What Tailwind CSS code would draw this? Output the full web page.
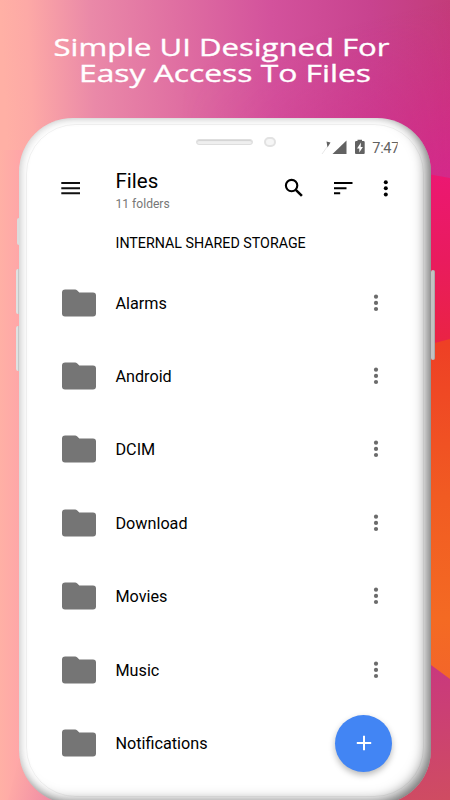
<!DOCTYPE html>
<html lang="en">
<head>
<meta charset="utf-8">
<meta name="viewport" content="width=device-width, initial-scale=1">
<title>Files</title>
<script src="https://cdn.jsdelivr.net/npm/@tailwindcss/browser@4"></script>
</head>
<body class="bg-[#d4509b]">
<div class="relative isolate flex h-[800px] w-[450px] flex-col overflow-hidden font-[Roboto,sans-serif]">
  <!-- Backdrop -->
  <svg class="absolute inset-0 -z-10" width="450" height="800" viewBox="0 0 450 800">
    <defs>
      <linearGradient id="base" gradientUnits="userSpaceOnUse" x1="0" y1="0" x2="450" y2="-20">
        <stop offset="0" stop-color="#ffb0a5"/><stop offset=".06" stop-color="#fda9a6"/><stop offset=".2" stop-color="#ea89a8"/><stop offset=".38" stop-color="#e070a2"/><stop offset=".6" stop-color="#d3529c"/><stop offset=".82" stop-color="#c8438f"/><stop offset="1" stop-color="#c33c7a"/>
      </linearGradient>
      <linearGradient id="glow" gradientUnits="userSpaceOnUse" x1="330" y1="30" x2="370" y2="190">
        <stop offset="0" stop-color="#d8248c" stop-opacity="0"/><stop offset="1" stop-color="#d8248c" stop-opacity=".8"/>
      </linearGradient>
      <linearGradient id="fade" x1="0" x2="1"><stop offset=".4" stop-color="#000"/><stop offset="1" stop-color="#fff"/></linearGradient>
      <mask id="m"><rect width="450" height="200" fill="url(#fade)"/></mask>
      <linearGradient id="left" gradientUnits="userSpaceOnUse" x1="0" y1="0" x2="20" y2="0"><stop offset="0" stop-color="#ffb0a5"/><stop offset="1" stop-color="#ffa6a8"/></linearGradient>
      <linearGradient id="bl" gradientUnits="userSpaceOnUse" x1="8" y1="790" x2="60" y2="800"><stop offset="0" stop-color="#ffaba6"/><stop offset="1" stop-color="#ec86a5"/></linearGradient>
      <linearGradient id="pink" x1="0" x2="0" y1="0" y2="1"><stop offset="0" stop-color="#ec1773"/><stop offset=".5" stop-color="#e91b5e"/><stop offset="1" stop-color="#ea2442"/></linearGradient>
      <linearGradient id="orange" x1="0" x2="0" y1="0" y2="1"><stop offset="0" stop-color="#ee3f25"/><stop offset=".45" stop-color="#f15b22"/><stop offset=".8" stop-color="#f46a23"/><stop offset="1" stop-color="#f3652a"/></linearGradient>
      <linearGradient id="low" gradientUnits="userSpaceOnUse" x1="425" y1="665" x2="440" y2="800"><stop offset="0" stop-color="#c9387e"/><stop offset="1" stop-color="#cf4c62"/></linearGradient>
    </defs>
    <rect width="450" height="800" fill="url(#base)"/>
    <rect width="450" height="200" fill="url(#glow)" mask="url(#m)"/>
    <rect y="150" width="24" height="650" fill="url(#left)"/>
    <path d="M8 800 24 740 90 800Z" fill="url(#bl)"/>
    <path d="M400 169 450 178V350H400Z" fill="url(#pink)"/>
    <path d="M400 352 431 344 450 339V690H400Z" fill="url(#orange)"/>
    <path d="M380 636 431 665 450 679V800H380Z" fill="url(#low)"/>
  </svg>

  <h1 class="h-[118px] shrink-0">
    <svg width="450" height="118" viewBox="0 0 450 118" fill="#fff" stroke="#fff" stroke-width=".35" font-family="'Open Sans', sans-serif" font-size="24.5" font-weight="500">
      <text x="53.5" y="56" textLength="336" lengthAdjust="spacingAndGlyphs">Simple UI Designed For</text>
      <text x="79" y="82" textLength="292" lengthAdjust="spacingAndGlyphs">Easy Access To Files</text>
    </svg>
  </h1>

  <!-- Side buttons -->
  <i class="absolute left-[17px] top-[218px] h-[27px] w-[5px] rounded-xs bg-[#dcdcdc]"></i>
  <i class="absolute left-4 top-[269px] h-[45px] w-[3px] rounded-l-xs border-r border-[#c4c8c8] bg-[#dfe2e2]"></i>
  <i class="absolute left-4 top-[326px] h-[45px] w-[3px] rounded-l-xs border-r border-[#c4c8c8] bg-[#dfe2e2]"></i>

  <main class="relative ml-[19px] flex h-[686px] w-[412px] shrink-0 flex-col rounded-[54px] bg-white shadow-[inset_-7px_-5px_13px_-2px_rgba(0,0,0,.5),inset_2px_0_9px_rgba(0,0,0,.17)]">
    <div class="pointer-events-none absolute inset-x-[7px] bottom-[7px] top-[6px] rounded-[50px] border border-black/5"></div>

    <!-- Status bar -->
    <div class="relative flex h-[44px] shrink-0">
      <div class="ml-[177px] mt-[21px] h-[6px] w-[57px] rounded-full border border-[#dedede] bg-[#efefef] shadow-[inset_0_1px_1px_rgba(0,0,0,.12)]"></div>
      <div class="ml-[11px] mt-[18.5px] h-[10px] w-[12px] rounded-full border-2 border-[#e2e2e2] bg-[#f6f6f6]"></div>
      <svg class="ml-[45px] mt-[20px] shrink-0" width="79" height="20" viewBox="321 138 79 20">
        <path d="M326.500 141.500 330.500 142.500 327.500 147.500Z" fill="#626262"/>
        <path d="M322 154 327 147" stroke="#ddd" stroke-width=".7"/>
        <path d="M346.500 140.500V154H332.500Z" fill="#626262"/>
        <path d="M357.500 141V139.700H362V141H363.500Q364.700 141 364.700 142.200V153Q364.700 154 363.700 154H356Q355 154 355 153V142.200Q355 141 356.200 141Z" fill="#626262"/>
        <path d="M361 142.500 357 148.500H359.300V152.500L362.900 146.900H360.700Z" fill="#fff"/>
        <text x="372.300" y="153.300" font-family="Roboto, sans-serif" font-size="14.500" fill="#626262" textLength="27">7:47</text>
        <path d="M398.400 138H400V158H394.800L397.300 147Z" fill="#fff"/>
      </svg>
    </div>

    <!-- Toolbar -->
    <header class="relative flex h-[58px] shrink-0 pl-[42px]">
      <svg class="mt-[19px] shrink-0" width="20" height="14" viewBox="0 0 20 14" fill="#111"><path d="M.3 1H19v2H.3zM.3 6.200H19v2H.3zM.3 11.300H19v2H.3z"/></svg>
      <div class="ml-[34.500px] w-[167.500px] pt-[6px]">
        <div class="text-[20.500px] leading-[26px] text-black">Files</div>
        <div class="mt-[2px] text-[12.100px] leading-[16px] text-[#777]">11 folders</div>
      </div>
      <svg class="ml-px mt-[16px] shrink-0" width="20" height="20" viewBox="0 0 20 20" fill="none" stroke="#000" stroke-width="2.100"><circle cx="7.600" cy="7.600" r="5.700"/><path d="m11.800 11.800 6.100 6.100" stroke-width="2.500"/></svg>
      <svg class="ml-[30px] mt-[19px] shrink-0" width="20" height="14" viewBox="0 0 20 14"><path d="M0 1H18.500v2H0zM0 6.200H12.500v2H0zM0 11.300H6.200v2H0z"/></svg>
      <svg class="ml-[28px] mt-[17px] shrink-0" width="8" height="18" viewBox="0 0 8 18"><circle cx="3.800" cy="3.200" r="2"/><circle cx="3.800" cy="9.300" r="2"/><circle cx="3.800" cy="15.500" r="2"/></svg>
    </header>

    <h2 class="relative mt-[13px] h-[20px] shrink-0 whitespace-nowrap pl-[96.500px] text-[14.250px] leading-[20px] text-black">INTERNAL SHARED STORAGE</h2>

    <svg class="hidden">
      <symbol id="folder" viewBox="0 0 34 28"><path d="M3.200.4H13.200Q14.200.4 15 1.200L17.300 3.600H31Q34 3.600 34 6.600V24.500Q34 27.500 31 27.500H3Q0 27.500 0 24.500V3.600Q0 .4 3.200.4Z" fill="#757575"/></symbol>
      <symbol id="more" viewBox="0 0 6 18"><g fill="#6b6b6b"><circle cx="3" cy="2.700" r="2.100"/><circle cx="3" cy="8.900" r="2.100"/><circle cx="3" cy="15" r="2.100"/></g></symbol>
    </svg>

    <ul class="relative mt-[13px] flex flex-col pl-[42.800px] pr-[52.500px] text-[16.200px] text-black">
      <li class="flex h-[73.400px] items-center"><svg width="34" height="28"><use href="#folder"/></svg><span class="ml-[19.700px] flex-1 pt-[2px]">Alarms</span><svg width="6" height="18"><use href="#more"/></svg></li>
      <li class="flex h-[73.400px] items-center"><svg width="34" height="28"><use href="#folder"/></svg><span class="ml-[19.700px] flex-1 pt-[2px]">Android</span><svg width="6" height="18"><use href="#more"/></svg></li>
      <li class="flex h-[73.400px] items-center"><svg width="34" height="28"><use href="#folder"/></svg><span class="ml-[19.700px] flex-1 pt-[2px]">DCIM</span><svg width="6" height="18"><use href="#more"/></svg></li>
      <li class="flex h-[73.400px] items-center"><svg width="34" height="28"><use href="#folder"/></svg><span class="ml-[19.700px] flex-1 pt-[2px]">Download</span><svg width="6" height="18"><use href="#more"/></svg></li>
      <li class="flex h-[73.400px] items-center"><svg width="34" height="28"><use href="#folder"/></svg><span class="ml-[19.700px] flex-1 pt-[2px]">Movies</span><svg width="6" height="18"><use href="#more"/></svg></li>
      <li class="flex h-[73.400px] items-center"><svg width="34" height="28"><use href="#folder"/></svg><span class="ml-[19.700px] flex-1 pt-[2px]">Music</span><svg width="6" height="18"><use href="#more"/></svg></li>
      <li class="flex h-[73.400px] items-center"><svg width="34" height="28"><use href="#folder"/></svg><span class="ml-[19.700px] flex-1 pt-[2px]">Notifications</span></li>
    </ul>

    <button aria-label="Add" class="absolute left-[316px] top-[596.500px] flex size-[57px] items-center justify-center rounded-full bg-[#4285f4] shadow-[0_3px_6px_rgba(0,0,0,.28)]">
      <svg width="16" height="16" viewBox="0 0 16 16" stroke="#fff" stroke-width="2"><path d="M.8 8H15.200M8 .8V15.200"/></svg>
    </button>
  </main>

  <i class="absolute left-[430.500px] top-[269.500px] h-[90px] w-[4.500px] rounded-xs border-r border-[#aaa] bg-[#c2c2c2]"></i>
</div>
</body>
</html>
